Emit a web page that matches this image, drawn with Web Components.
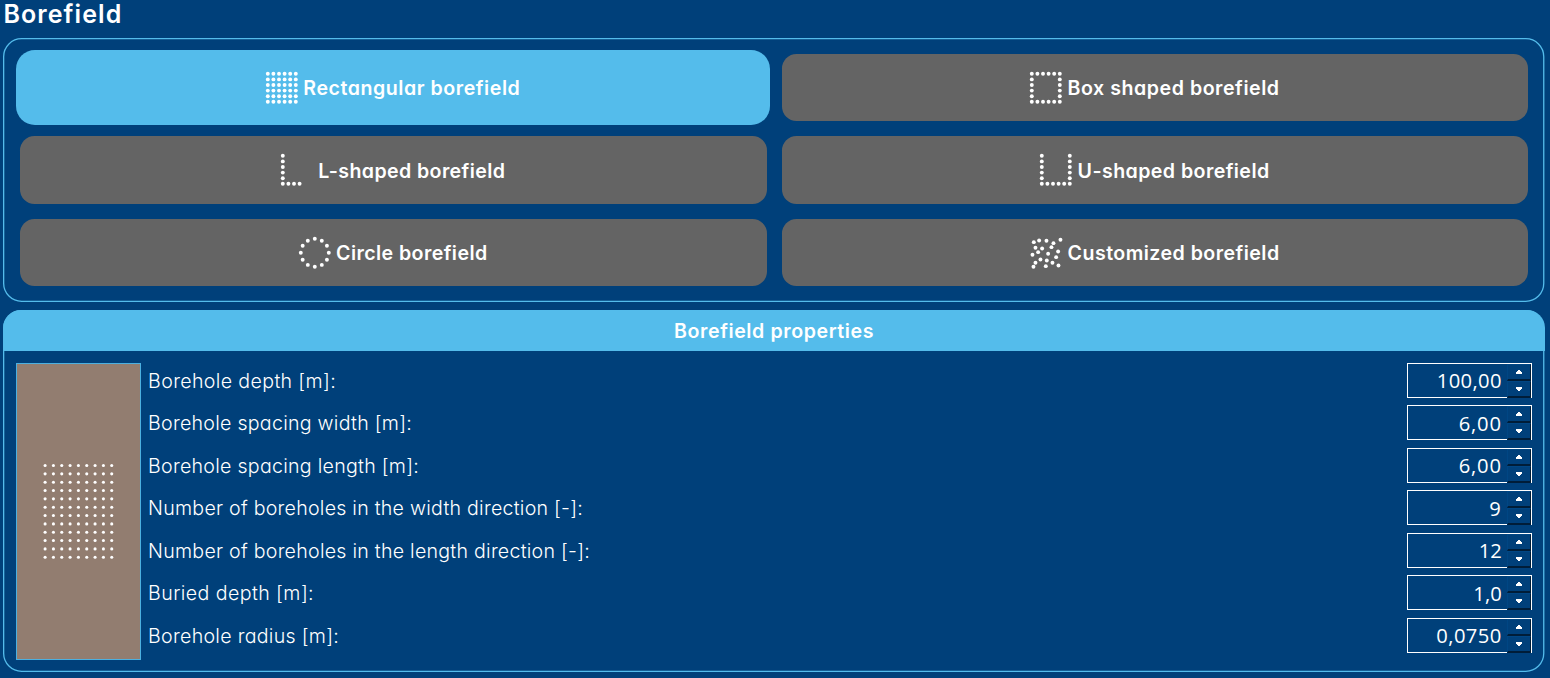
<!DOCTYPE html>
<html lang="en">
<head>
<meta charset="utf-8">
<title>Borefield</title>
<style>
html,body{margin:0;height:100%;background:#00407a;overflow:hidden}
body{font-family:Inter,"Noto Sans",sans-serif;color:#fff}
</style>
</head>
<body>
<borefield-page></borefield-page>
<script>
const define = (name, cls) => customElements.define(name, cls);

/* One line of text whose tracking is adjusted to a given advance width. */
define('fit-text', class extends HTMLElement {
  connectedCallback() {
    const w = this.getAttribute('w');
    this.attachShadow({mode:'open'}).innerHTML = `<style>
      :host{display:block;flex:none;width:${w}px;white-space:nowrap;font-feature-settings:"cv11"}
      span{display:inline-block}</style><span></span>`;
    const s = this.shadowRoot.querySelector('span');
    s.textContent = this.getAttribute('text');
    s.style.letterSpacing = ((w - s.getBoundingClientRect().width) / s.textContent.length).toFixed(3) + 'px';
  }
});

const line = (x0, y0, x1, y1, n) => Array.from({length:n}, (_, i) =>
  [x0 + (x1-x0)*i/(n-1), y0 + (y1-y0)*i/(n-1)]);
const patterns = {
  rect: () => [0,1,2,3,4,5].flatMap(r => line(2, 2+r*5.6, 30, 2+r*5.6, 6)),
  box: () => [...line(2,2,30,2,6), ...line(2,30,30,30,6), ...line(2,7.6,2,24.4,4), ...line(30,7.6,30,24.4,4)],
  l: () => [...line(2,2,2,30,6), ...line(7.6,30,18.8,30,3)],
  u: () => [...line(2,2,2,30,6), ...line(7.6,30,30,30,5), ...line(30,2,30,24.4,5)],
  circle: () => Array.from({length:12}, (_, i) => [16+14*Math.cos(i*Math.PI/6), 16+14*Math.sin(i*Math.PI/6)]),
  custom: () => [[41,306],[57,301],[79,302],[121,299],[46,323],[66,325],[100,309],[94,321],[114,334],[37,344],
    [54,336],[84,341],[61,358],[80,361],[108,351],[97,368],[115,376],[46,368],[40,380],[77,378]]
    .map(([x,y]) => [(x-29)/3, (y-290)/3])
};

define('dot-icon', class extends HTMLElement {
  connectedCallback() {
    const dots = patterns[this.getAttribute('kind')]();
    this.attachShadow({mode:'open'}).innerHTML = `<style>:host{display:block;flex:none;width:32px;height:32px}svg{display:block;overflow:visible}</style>
      <svg width="32" height="32" fill="#fff">${dots.map(([x,y]) => `<circle cx="${(x-.2).toFixed(2)}" cy="${(y-.2).toFixed(2)}" r="1.95"/>`).join('')}</svg>`;
  }
});

define('shape-button', class extends HTMLElement {
  connectedCallback() {
    this.attachShadow({mode:'open'}).innerHTML = `<style>
      :host{display:flex;height:75px;box-sizing:border-box;padding:3.75px}
      :host([active]){padding:0}
      button{flex:1;display:flex;align-items:center;justify-content:center;gap:5.2px;border:0;padding:0;margin:0;
        border-radius:14.5px;background:#646464;color:#fff;font:600 19.6px/24px Inter,"Noto Sans",sans-serif}
      :host([active]) button{border-radius:19px;background:#54bceb}
      fit-text{padding-top:.7px}
    </style><button><dot-icon kind="${this.getAttribute('kind')}"></dot-icon><fit-text w="${this.getAttribute('w')}" text="${this.getAttribute('label')}"></fit-text></button>`;
  }
});

/* Rounded outline shared by both groups. */
define('group-frame', class extends HTMLElement {
  connectedCallback() {
    const h = +this.getAttribute('h');
    this.attachShadow({mode:'open'}).innerHTML = `<style>
      :host{display:block;position:relative;box-sizing:border-box;height:${h}px;width:1541.4px}
      svg{position:absolute;inset:0;pointer-events:none;overflow:visible}
    </style><slot></slot><svg width="1542" height="${h}"><rect x=".65" y=".65" width="1540.1" height="${h-1.3}" rx="18" fill="none" stroke="#54bceb" stroke-width="1.3"/></svg>`;
  }
});

define('number-field', class extends HTMLElement {
  connectedCallback() {
    this.attachShadow({mode:'open'}).innerHTML = `<style>
      :host{display:flex;align-items:center;justify-content:space-between;height:35px;color:#fff;font:350 19.6px/24px Inter,"Noto Sans",sans-serif}
      .label{padding-top:1.3px;margin-left:.6px}
      .box{display:flex;width:125px;height:35px;box-sizing:border-box;border:1px solid #fff}
      .val{flex:1;display:flex;justify-content:flex-end;align-items:center;padding-right:5px;font:400 20.2px/32px "Open Sans","Noto Sans",sans-serif}
      .spin{width:24px;display:flex;flex-direction:column;margin-bottom:-1px}
      .spin div{flex:1;box-sizing:border-box;border:1px solid #004684;border-right:1px solid #001d38;border-bottom:2px solid #001d38;display:flex;align-items:center;justify-content:center}
      svg{display:block}
    </style><fit-text class="label" w="${this.getAttribute('lw')}" text="${this.getAttribute('label')}"></fit-text>
    <div class="box"><div class="val"><fit-text w="${this.getAttribute('vw')}" text="${this.getAttribute('value')}"></fit-text></div>
    <div class="spin"><div><svg width="8" height="4" fill="#fff"><path d="M3 0h2v1h1v1h1v2h-6v-2h1v-1h1z"/></svg></div><div><svg width="8" height="4" fill="#fff"><path d="M1 0h6v2h-1v1h-1v1h-2v-1h-1v-1h-1z"/></svg></div></div></div>`;
  }
});

define('field-preview', class extends HTMLElement {
  connectedCallback() {
    let dots = '';
    for (let r = 0; r < 12; r++) for (let c = 0; c < 9; c++)
      dots += `<circle cx="${(28.1+c*8.33).toFixed(2)}" cy="${(101.5+r*8.34).toFixed(2)}" r="1.55"/>`;
    this.attachShadow({mode:'open'}).innerHTML = `<style>:host{display:block;box-sizing:border-box;width:125px;height:297px;border:1px solid #4cb0e0;background:#927d70}svg{display:block}</style>
      <svg width="123" height="295" fill="#fff">${dots}</svg>`;
  }
});

define('borefield-page', class extends HTMLElement {
  connectedCallback() {
    this.attachShadow({mode:'open'}).innerHTML = `<style>
      :host{display:block;box-sizing:border-box;width:1550px;height:678px;padding-left:3.4px}
      h1{margin:0;height:38px;box-sizing:border-box;font:600 25px/28px Inter,"Noto Sans",sans-serif}
      .grid{display:grid;grid-template-columns:754.5px 754px;gap:7.5px;padding:12.2px 0 0 12.6px}
      .second{margin-top:7.8px}
      .head{height:41.2px;box-sizing:border-box;background:#54bceb;border-radius:18px 18px 0 0;display:flex;justify-content:center;padding-top:1px;font:600 19.6px/41px Inter,"Noto Sans",sans-serif}
      .body{display:flex;gap:6.5px;padding:11.7px 13px 0 12.6px}
      .rows{flex:1;display:flex;flex-direction:column;gap:7.5px}
    </style>
    <h1><fit-text w="119" text="Borefield"></fit-text></h1>
    <group-frame h="264"><div class="grid">
      <shape-button active kind="rect" w="217" label="Rectangular borefield"></shape-button>
      <shape-button kind="box" w="212" label="Box shaped borefield"></shape-button>
      <shape-button kind="l" w="187" label="L-shaped borefield"></shape-button>
      <shape-button kind="u" w="192" label="U-shaped borefield"></shape-button>
      <shape-button kind="circle" w="151.5" label="Circle borefield"></shape-button>
      <shape-button kind="custom" w="212" label="Customized borefield"></shape-button>
    </div></group-frame>
    <group-frame class="second" h="362"><div class="head"><fit-text w="200" text="Borefield properties"></fit-text></div>
      <div class="body"><field-preview></field-preview><div class="rows">
        <number-field lw="188" label="Borehole depth [m]:" vw="65" value="100,00"></number-field>
        <number-field lw="264" label="Borehole spacing width [m]:" vw="43" value="6,00"></number-field>
        <number-field lw="271" label="Borehole spacing length [m]:" vw="43" value="6,00"></number-field>
        <number-field lw="435" label="Number of boreholes in the width direction [-]:" vw="12.5" value="9"></number-field>
        <number-field lw="442" label="Number of boreholes in the length direction [-]:" vw="23" value="12"></number-field>
        <number-field lw="166" label="Buried depth [m]:" vw="28.5" value="1,0"></number-field>
        <number-field lw="191" label="Borehole radius [m]:" vw="65.5" value="0,0750"></number-field>
      </div></div></group-frame>`;
  }
});
</script>
</body>
</html>
